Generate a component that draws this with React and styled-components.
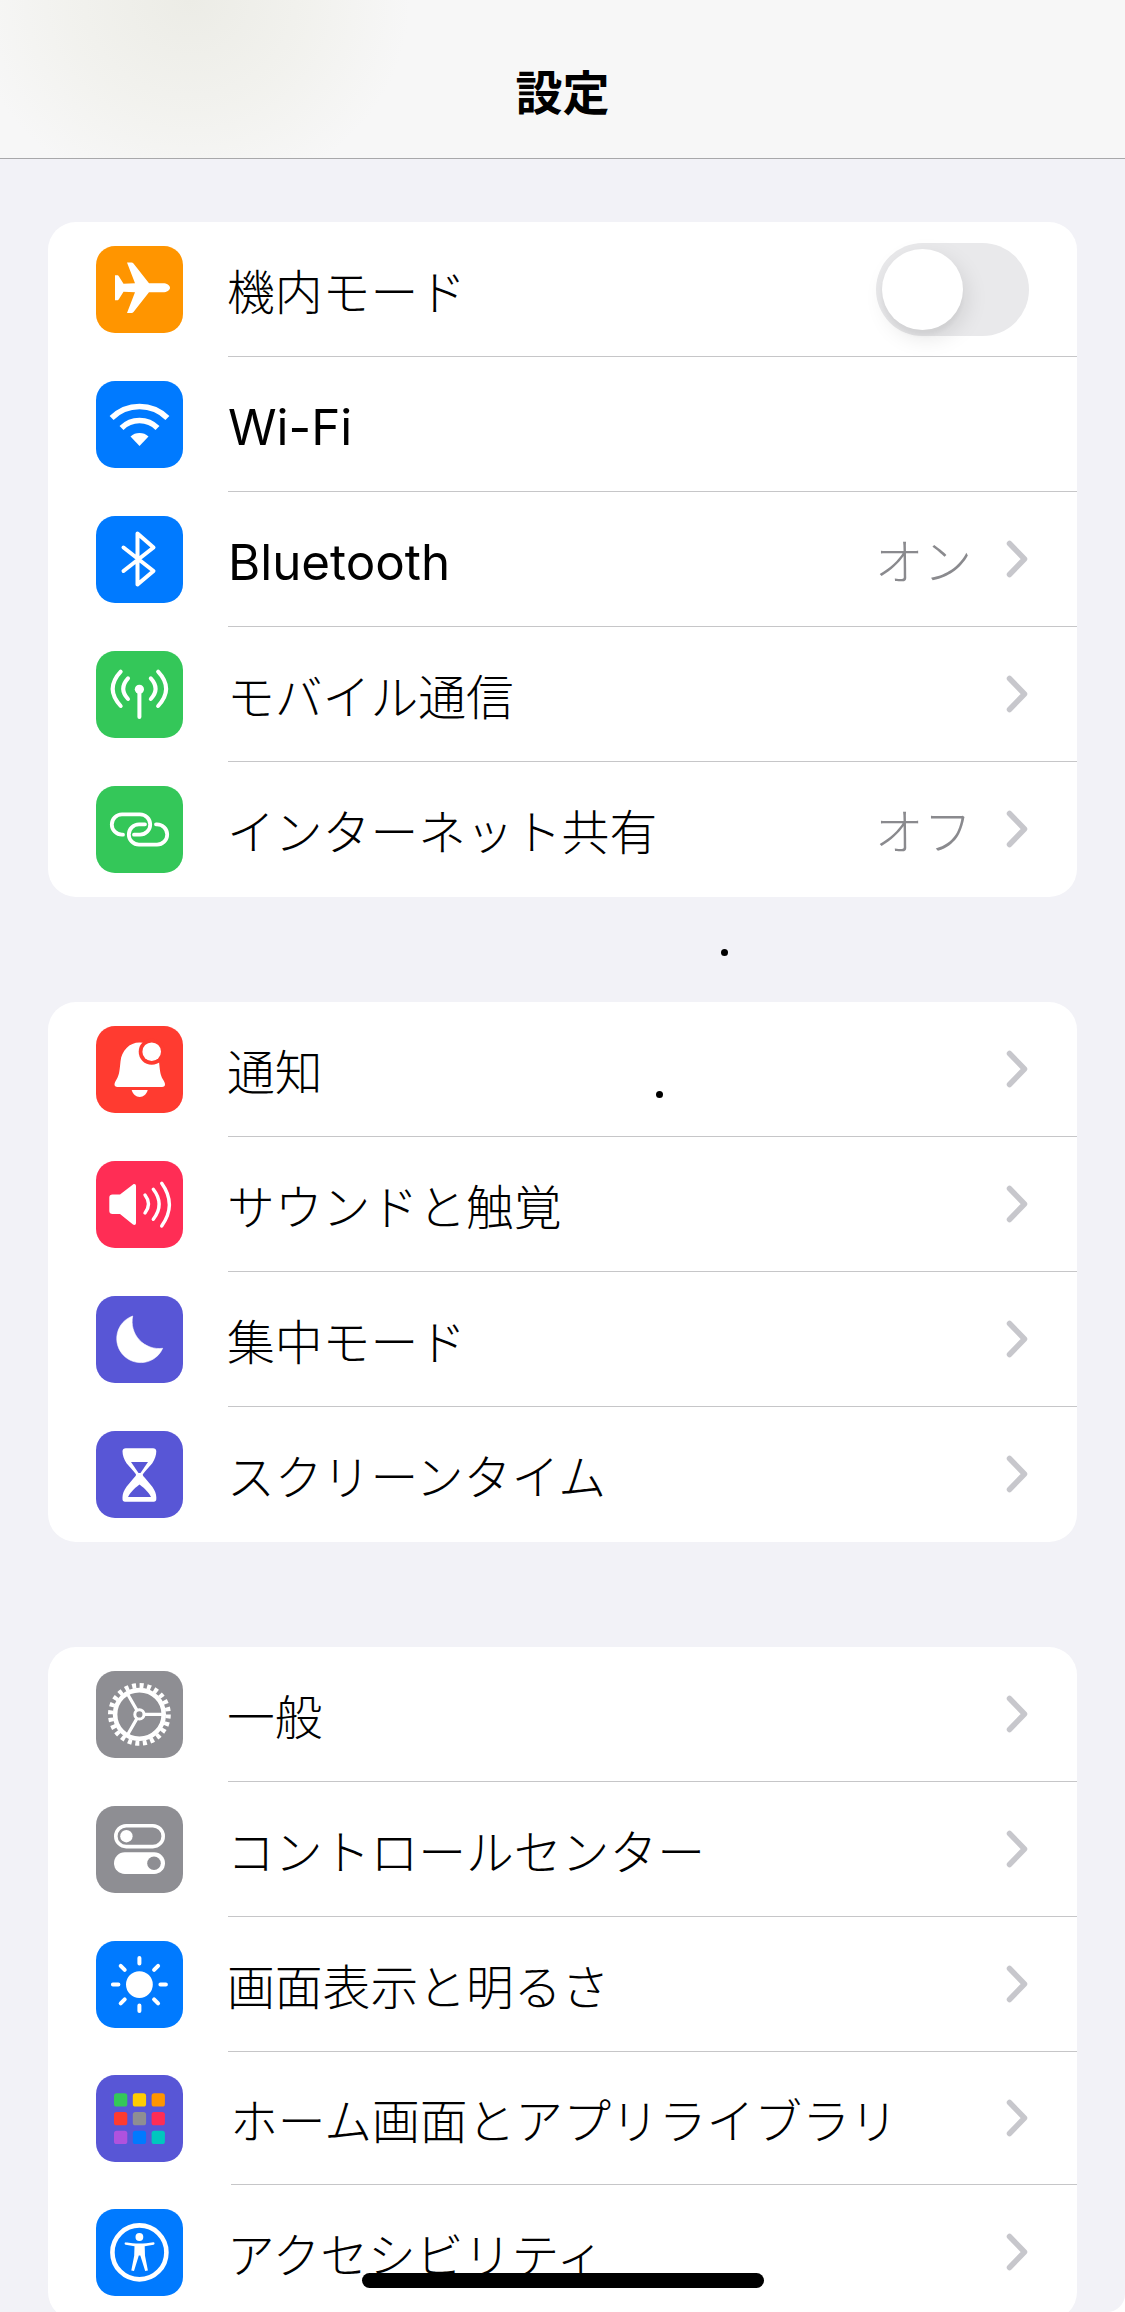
import styled, { createGlobalStyle } from 'styled-components';

const GlobalStyle = createGlobalStyle`
  html, body {
    margin: 0;
    padding: 0;
    background: #fff;
  }
  body {
    font-family: "Noto Sans CJK JP", sans-serif;
    color: #000;
  }
`;

const Screen = styled.div`
  position: relative;
  width: 1125px;
  height: 2312px;
  overflow: hidden;
  background: #f2f2f7;
  border-bottom-right-radius: 18px;
`;
const Header = styled.header`
  height: 158px;
  box-sizing: content-box;
  display: flex;
  align-items: flex-start;
  justify-content: center;
  border-bottom: 1.5px solid #a8a8aa;
  background:
    radial-gradient(ellipse 220px 200px at 190px 0, #ecece6 0%, rgba(240, 240, 235, 0.75) 55%, rgba(247, 247, 247, 0) 100%),
    #f7f7f7;
`;
const Title = styled.h1`
  margin: 62px 0 0;
  font-size: 47px;
  line-height: 56px;
  font-weight: 700;
`;
const Groups = styled.main`
  display: flex;
  flex-direction: column;
  gap: 105px;
  padding: 62.5px 48px 0;
`;
const Group = styled.section`
  background: #fff;
  border-radius: 28px;
  overflow: hidden;
  &:last-child {
    margin-bottom: -40px;
  }
`;
const StyledRow = styled.div`
  height: ${(p) => p.$height || 135}px;
  display: flex;
  align-items: center;
  padding-left: 48px;
  gap: ${(p) => p.$gap || 45}px;
`;
const IconBox = styled.div`
  width: 87px;
  height: 87px;
  flex: none;
  border-radius: 19px;
  background: ${(p) => p.$color};
  & svg {
    display: block;
    width: 87px;
    height: 87px;
  }
`;
const RowBody = styled.div`
  flex: 1;
  height: 100%;
  box-sizing: border-box;
  display: flex;
  align-items: center;
  justify-content: space-between;
  padding-right: 49px;
  border-bottom: ${(p) => (p.$last ? 'none' : '1px solid #c6c6c8')};
`;
const Label = styled.span`
  font-family: ${(p) => (p.$latin ? '"Inter", sans-serif' : 'inherit')};
  font-size: ${(p) => (p.$latin ? 49.3 : 47.8)}px;
  line-height: 56px;
  font-weight: ${(p) => (p.$latin ? 400 : 300)};
  padding-top: ${(p) => (p.$latin ? 7 : 2)}px;
  margin-left: ${(p) => (p.$latin ? 0 : -1)}px;
  white-space: nowrap;
`;
const Accessory = styled.div`
  display: flex;
  align-items: center;
  gap: 34px;
`;
const Value = styled.span`
  font-size: 48.6px;
  line-height: 56px;
  font-weight: 300;
  color: #8a8a8e;
`;
const ChevronIcon = styled.svg`
  display: block;
  width: 22px;
  height: 38px;
`;
const Toggle = styled.div`
  width: 153px;
  height: 93px;
  box-sizing: border-box;
  margin: 2px -1px 0 0;
  padding: 6px;
  border-radius: 47px;
  background: #e9e9eb;
`;
const Knob = styled.div`
  width: 81px;
  height: 81px;
  border-radius: 50%;
  background: #fff;
  box-shadow: 4px 8px 22px rgba(0, 0, 0, 0.1), 0 6px 4px rgba(0, 0, 0, 0.03);
`;
const HomeBar = styled.div`
  position: absolute;
  left: 362px;
  top: 2273px;
  width: 402px;
  height: 15px;
  border-radius: 8px;
  background: #000;
`;
const Dot = styled.div`
  position: absolute;
  left: ${(p) => p.$x - 3.5}px;
  top: ${(p) => p.$y - 3.5}px;
  width: 7px;
  height: 7px;
  border-radius: 50%;
  background: #000;
`;

const Svg = ({ children }) => <svg viewBox="0 0 87 87">{children}</svg>;

const Plane = () => (
  <Svg>
    <path
      fill="#fff"
      d="M74 41.700c0-2.600-3.300-4.500-7-4.500H53L37.500 17.500c-.6-.7-1.200-1-2-1H31L39 37.200l-11.500.5L23 30.500c-.5-.8-1-1.300-2-1.300h-2v25h2c1 0 1.500-.5 2-1.300l4.500-7.200 11.500.5L31 67h4.500c.8 0 1.500-.4 2-1L53 46.200h14c3.700 0 7-2 7-4.500z"
    />
  </Svg>
);
const Wifi = () => (
  <Svg>
    <g fill="none" stroke="#fff" strokeWidth="5.600">
      <path d="M15.600 37.100A39.500 39.500 0 0 1 71.400 37.100" />
      <path d="M25.500 47A25.500 25.500 0 0 1 61.500 47" />
    </g>
    <path fill="#fff" d="M43.500 65L34.500 55.500A13.500 13.500 0 0 1 52.500 55.500Z" />
  </Svg>
);
const Bluetooth = () => (
  <Svg>
    <path
      fill="none"
      stroke="#fff"
      strokeWidth="4"
      strokeLinecap="round"
      strokeLinejoin="round"
      d="M27.500 31.500L57.500 55L41.500 68.500V17.500L57.500 31.500L27.500 55"
    />
  </Svg>
);
const Antenna = () => (
  <Svg>
    <g fill="none" stroke="#fff" strokeWidth="4" strokeLinecap="round">
      <path d="M43.400 40V66" />
      <path d="M32 27.300Q22.500 37.600 32 48" />
      <path d="M24.700 20.700Q8.700 37.800 24.700 55" />
      <path d="M54.800 27.300Q64.300 37.600 54.800 48" />
      <path d="M62.100 20.700Q78.100 37.800 62.100 55" />
    </g>
    <circle cx="43.400" cy="38.300" r="4.600" fill="#fff" />
  </Svg>
);
const Link = () => (
  <Svg>
    <g fill="none" stroke="#fff" strokeWidth="3.800" strokeLinecap="round">
      <path d="M27 48.700H26a10.200 10.200 0 0 1 0-20.400H44a10.200 10.200 0 0 1 0 20.400H38" />
      <path d="M60 38.300H61a10.200 10.200 0 0 1 0 20.400H43a10.200 10.200 0 0 1 0-20.400H49" />
    </g>
  </Svg>
);
const Bell = () => (
  <Svg>
    <path
      fill="#fff"
      d="M43.500 16.500c-10 0-18 8-19 19-1 9-1 13-4 18-1 2-2 3-2 5 0 1.500 1 2.500 3 2.500H66c2 0 3-1 3-2.500 0-2-1-3-2-5-3-5-3-9-4-18-1-11-9-19-19-19z"
    />
    <path fill="#fff" d="M35.700 64H51.700C50.700 68 47.500 71 43.700 71S36.700 68 35.700 64z" />
    <circle cx="55.700" cy="25.700" r="13" fill="#ff3b30" />
    <circle cx="55.700" cy="25.700" r="9.300" fill="#fff" />
  </Svg>
);
const Sound = () => (
  <Svg>
    <path
      fill="#fff"
      d="M16.500 33.500H24L37 23.500c1.500-1 3-.3 3 1.500V62c0 1.800-1.500 2.500-3 1.500L24 53H16.500c-2 0-3.200-1.200-3.200-3V36.500c0-1.800 1.200-3 3.200-3z"
    />
    <g fill="none" stroke="#fff" strokeWidth="3.400" strokeLinecap="round">
      <path d="M49 34Q56 43 49 52" />
      <path d="M57.300 28.300Q69 43.300 57.300 58.300" />
      <path d="M65.700 22.300Q81 43.600 65.700 65" />
    </g>
  </Svg>
);
const Moon = () => (
  <Svg>
    <path
      fill="#fff"
      stroke="#fff"
      strokeWidth="0.600"
      strokeLinejoin="round"
      d="M36.700 20A24 24 0 1 0 66.700 52.300A27 27 0 0 1 36.700 20Z"
    />
  </Svg>
);
const Hourglass = () => (
  <Svg>
    <path
      fill="#fff"
      d="M30 17.300H57c2 0 3.300 1.300 3.300 3 0 4-1.500 8-4 12l-7.500 8.500c-1.500 1.800-2 2.500-2 3s.5 1.500 2 3l7.500 9c2.500 3.500 4 7 4 10.500v2c0 1.500-1 2.500-2.500 2.500H29c-1.500 0-2.500-1-2.500-2.500v-2c0-3.500 1.500-7 4-10.500l7.500-9c1.500-1.500 2-2.500 2-3s-.5-1.200-2-3l-7.500-8.500c-2.500-4-4-8-4-12 0-1.700 1.300-3 3.300-3z"
    />
    <path fill="#5856d6" d="M35 31H52L44.500 42H42.500z" />
    <path fill="#5856d6" d="M32 66H55C53.500 62.500 49.500 58 43.500 53.500C37.500 58 33.500 62.500 32 66z" />
  </Svg>
);
const Gear = () => (
  <Svg>
    <g fill="none" stroke="#fff">
      <circle cx="43.400" cy="43.400" r="28.800" strokeWidth="5.200" strokeDasharray="4 3.540" />
      <circle cx="43.400" cy="43.400" r="24.300" strokeWidth="4.600" />
      <circle cx="43.400" cy="43.400" r="4.600" strokeWidth="3" />
      <path strokeWidth="3.200" d="M48 43.400H68M41 39.400L31 22M41 47.400L31 64.800" />
    </g>
  </Svg>
);
const Switches = () => (
  <Svg>
    <rect x="19.800" y="19.800" width="47.400" height="20.800" rx="10.400" fill="none" stroke="#fff" strokeWidth="3.600" />
    <circle cx="30.400" cy="30.200" r="6.200" fill="#fff" />
    <rect x="18" y="46.300" width="51" height="21.700" rx="10.800" fill="#fff" />
    <circle cx="58" cy="57.200" r="6.800" fill="#8e8e93" />
  </Svg>
);
const Sun = () => (
  <Svg>
    <circle cx="43.400" cy="43.600" r="13.400" fill="#fff" />
    <path
      fill="none"
      stroke="#fff"
      strokeWidth="4"
      strokeLinecap="round"
      d="M43.400 17.100V22.600M43.400 64.600V70.100M16.900 43.600H22.400M64.400 43.600H69.900M24.700 24.900L28.700 28.900M58.100 58.300L62.100 62.300M24.700 62.300L28.700 58.300M58.100 28.900L62.100 24.900"
    />
  </Svg>
);
const tileColors = ['#34c759', '#ffcc00', '#ff9500', '#ff3b30', '#8e8e93', '#ff2d55', '#af52de', '#007aff', '#00c7be'];
const Tiles = () => (
  <Svg>
    {tileColors.map((color, i) => (
      <rect
        key={color}
        x={18 + (i % 3) * 18.800}
        y={18.300 + Math.floor(i / 3) * 18.700}
        width="13.300"
        height="13.300"
        rx="2.600"
        fill={color}
      />
    ))}
  </Svg>
);
const Access = () => (
  <Svg>
    <circle cx="43.400" cy="43.400" r="27" fill="none" stroke="#fff" strokeWidth="4.600" />
    <circle cx="43.400" cy="28" r="3.900" fill="#fff" />
    <path
      fill="#fff"
      d="M29.500 33.200C34 34 39 34.500 43.400 34.500S53 34 57.400 33.200c1.500 0 1.500 2.300.2 2.500l-8.900 1.500 .3 9.500 2.900 14.800-2.700.6-4.900-15.500h-1.500l-4.800 15.500-2.700-.6 2.900-14.800 .3-9.500-8.900-1.500c-1.400-.2-1.300-2.500.2-2.500z"
    />
  </Svg>
);
const Chevron = () => (
  <ChevronIcon viewBox="0 0 22 38">
    <path
      fill="none"
      stroke="#c7c7cc"
      strokeWidth="5.500"
      strokeLinecap="round"
      strokeLinejoin="round"
      d="M3.500 3.500L18.500 19L3.500 34.500"
    />
  </ChevronIcon>
);

const groups = [
  [
    { label: '機内モード', color: '#ff9500', Icon: Plane, toggle: true },
    { label: 'Wi-Fi', color: '#007aff', Icon: Wifi, plain: true, latin: true },
    { label: 'Bluetooth', color: '#007aff', Icon: Bluetooth, value: 'オン', latin: true },
    { label: 'モバイル通信', color: '#34c759', Icon: Antenna },
    { label: 'インターネット共有', color: '#34c759', Icon: Link, value: 'オフ', last: true },
  ],
  [
    { label: '通知', color: '#ff3b30', Icon: Bell },
    { label: 'サウンドと触覚', color: '#ff2d55', Icon: Sound },
    { label: '集中モード', color: '#5856d6', Icon: Moon },
    { label: 'スクリーンタイム', color: '#5856d6', Icon: Hourglass, last: true },
  ],
  [
    { label: '一般', color: '#8e8e93', Icon: Gear },
    { label: 'コントロールセンター', color: '#8e8e93', Icon: Switches },
    { label: '画面表示と明るさ', color: '#007aff', Icon: Sun },
    { label: 'ホーム画面とアプリライブラリ', color: '#5856d6', Icon: Tiles, height: 133, gap: 48 },
    { label: 'アクセシビリティ', color: '#007aff', Icon: Access, last: true },
  ],
];

function Row({ item }) {
  const { label, color, Icon, toggle, plain, value, last, height, gap, latin } = item;
  return (
    <StyledRow $height={height} $gap={gap}>
      <IconBox $color={color}>
        <Icon />
      </IconBox>
      <RowBody $last={last}>
        <Label $latin={latin}>{label}</Label>
        {toggle && (
          <Toggle>
            <Knob />
          </Toggle>
        )}
        {!toggle && !plain && (
          <Accessory>
            {value && <Value>{value}</Value>}
            <Chevron />
          </Accessory>
        )}
      </RowBody>
    </StyledRow>
  );
}

export default function App() {
  return (
    <>
      <GlobalStyle />
      <Screen>
        <Header>
          <Title>設定</Title>
        </Header>
        <Groups>
          {groups.map((rows) => (
            <Group key={rows[0].label}>
              {rows.map((item) => (
                <Row key={item.label} item={item} />
              ))}
            </Group>
          ))}
        </Groups>
        <Dot $x={724.7} $y={952.7} />
        <Dot $x={659.7} $y={1094.7} />
        <HomeBar />
      </Screen>
    </>
  );
}
